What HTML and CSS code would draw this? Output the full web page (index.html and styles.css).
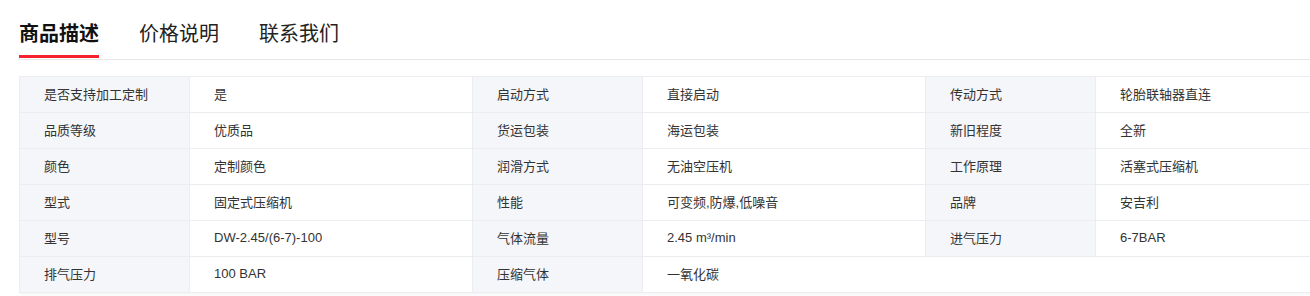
FILE: index.html
```html
<!DOCTYPE html>
<html lang="zh-CN">
<head>
<meta charset="utf-8">
<title>商品描述</title>
<link rel="stylesheet" href="styles.css">
</head>
<body>
<div class="page">
  <div class="tabs">
    <div class="tab active">商品描述</div>
    <div class="tab">价格说明</div>
    <div class="tab">联系我们</div>
  </div>
  <div class="attrs-wrap">
    <div class="attrs">
      <div class="k">是否支持加工定制</div><div class="v">是</div>
      <div class="k">启动方式</div><div class="v">直接启动</div>
      <div class="k">传动方式</div><div class="v">轮胎联轴器直连</div>

      <div class="k">品质等级</div><div class="v">优质品</div>
      <div class="k">货运包装</div><div class="v">海运包装</div>
      <div class="k">新旧程度</div><div class="v">全新</div>

      <div class="k">颜色</div><div class="v">定制颜色</div>
      <div class="k">润滑方式</div><div class="v">无油空压机</div>
      <div class="k">工作原理</div><div class="v">活塞式压缩机</div>

      <div class="k">型式</div><div class="v">固定式压缩机</div>
      <div class="k">性能</div><div class="v">可变频,防爆,低噪音</div>
      <div class="k">品牌</div><div class="v">安吉利</div>

      <div class="k">型号</div><div class="v">DW-2.45/(6-7)-100</div>
      <div class="k">气体流量</div><div class="v">2.45 m³/min</div>
      <div class="k">进气压力</div><div class="v">6-7BAR</div>

      <div class="k">排气压力</div><div class="v">100 BAR</div>
      <div class="k">压缩气体</div><div class="v open">一氧化碳</div>
      <div class="empty"></div>
    </div>
  </div>
</div>
</body>
</html>
```

FILE: styles.css
```css
html, body {
  margin: 0;
  padding: 0;
  background: #ffffff;
}
body {
  font-family: "Liberation Sans", "Noto Sans CJK SC", sans-serif;
  color: #333333;
  overflow: hidden;
}
.page {
  padding-left: 19px;
  overflow: hidden;
}
.tabs {
  display: flex;
  gap: 40px;
  height: 60px;
  border-bottom: 1px solid #e6e6e6;
  box-sizing: border-box;
}
.tab {
  font-family: "Noto Sans CJK SC", sans-serif;
  font-size: 20px;
  line-height: 28px;
  padding-top: 19px;
  height: 58px;
  box-sizing: border-box;
  color: #222222;
}
.tab.active {
  font-weight: 700;
  color: #111111;
  border-bottom: 3px solid #f5222d;
}
.attrs-wrap {
  margin-top: 16px;
  padding-bottom: 4px;
  overflow: hidden;
}
.attrs {
  display: grid;
  grid-template-columns: 170px 283px 170px 283px 170px 283px;
  grid-auto-rows: 36px;
  width: max-content;
  border-top: 1px solid #ebedf0;
  border-left: 1px solid #ebedf0;
  box-shadow: 0 1px 4px rgba(0, 0, 0, 0.06);
  font-size: 13px;
}
.k, .v {
  display: flex;
  align-items: center;
  padding-left: 24px;
  padding-bottom: 3px;
  border-right: 1px solid #ebedf0;
  border-bottom: 1px solid #ebedf0;
  box-sizing: border-box;
}
.k {
  background: #f5f6fa;
}
.v {
  background: #ffffff;
}
.v.open {
  border-right: none;
}
.empty {
  grid-column: span 2;
  border-bottom: 1px solid #ebedf0;
  box-sizing: border-box;
}
```
